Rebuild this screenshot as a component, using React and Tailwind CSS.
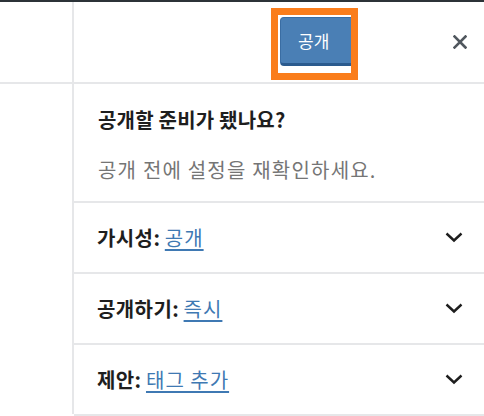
import React from "react";

function CloseIcon() {
  return (
    <svg width="14" height="14" viewBox="0 0 14 14" fill="none">
      <path
        d="M1.5 1.5L12.5 12.5M12.5 1.5L1.5 12.5"
        stroke="#50575e"
        strokeWidth="2.6"
        strokeLinecap="square"
      />
    </svg>
  );
}

function Chevron() {
  return (
    <svg width="18" height="11" viewBox="0 0 18 11" fill="none">
      <path
        d="M1.5 1.5L9 8.5L16.5 1.5"
        stroke="#1e1e1e"
        strokeWidth="2.4"
      />
    </svg>
  );
}

const rows = [
  { label: "가시성:", value: "공개" },
  { label: "공개하기:", value: "즉시" },
  { label: "제안:", value: "태그 추가" },
];

function App() {
  return (
    <div className="w-[484px] h-[416px] overflow-hidden bg-white border-t-2 border-[#2c3338] font-['Noto_Sans_CJK_KR',sans-serif]">
      {/* header */}
      <div className="flex h-[82px] border-b-2 border-[#e6e7e9]">
        <div className="w-[74px] shrink-0 border-r-2 border-[#e6e7e9]"></div>
        <div className="flex flex-1 items-start pt-[6px]">
          <div className="ml-[197px] w-[87px] h-[72px] border-[7px] border-[#fa7d1b] bg-white overflow-hidden pl-[2px] pt-[2px]">
            <button className="w-[78px] h-[49px] rounded-l-[4px] bg-[#4a7fb5] border border-[#3a6da3] border-b-[3px] border-b-[#2b5b8e] text-white text-[17px] text-left pl-[17px] leading-none">
              공개
            </button>
          </div>
          <div className="ml-[90px] mt-[22px] w-[24px] h-[24px] flex items-center justify-center">
            <CloseIcon />
          </div>
        </div>
      </div>

      {/* body */}
      <div className="flex h-[330px]">
        <div className="w-[74px] shrink-0 border-r-2 border-[#e6e7e9]"></div>
        <div className="flex-1">
          <div className="pl-[24px] pt-[24px] pb-[19px] border-b-2 border-[#e6e7e9]">
            <h2 className="text-[20px] leading-[24px] font-bold text-[#1e1e1e] tracking-[0.2px]">
              공개할 준비가 됐나요?
            </h2>
            <p className="mt-[26px] text-[20px] leading-[24px] text-[#757575] tracking-[1.2px]">
              공개 전에 설정을 재확인하세요.
            </p>
          </div>
          {rows.map((row) => (
            <div
              key={row.label}
              className="flex h-[71px] items-center justify-between pl-[23px] pr-[21px] border-b-2 border-[#e6e7e9]"
            >
              <div className="text-[20px] leading-[24px] text-[#1e1e1e]">
                <span className="font-bold tracking-[0.4px]">{row.label}</span>{" "}
                <a
                  href="#"
                  className="text-[#3f79b3] underline underline-offset-[3px] tracking-[1px]"
                >
                  {row.value}
                </a>
              </div>
              <Chevron />
            </div>
          ))}
        </div>
      </div>
    </div>
  );
}

export default App;
